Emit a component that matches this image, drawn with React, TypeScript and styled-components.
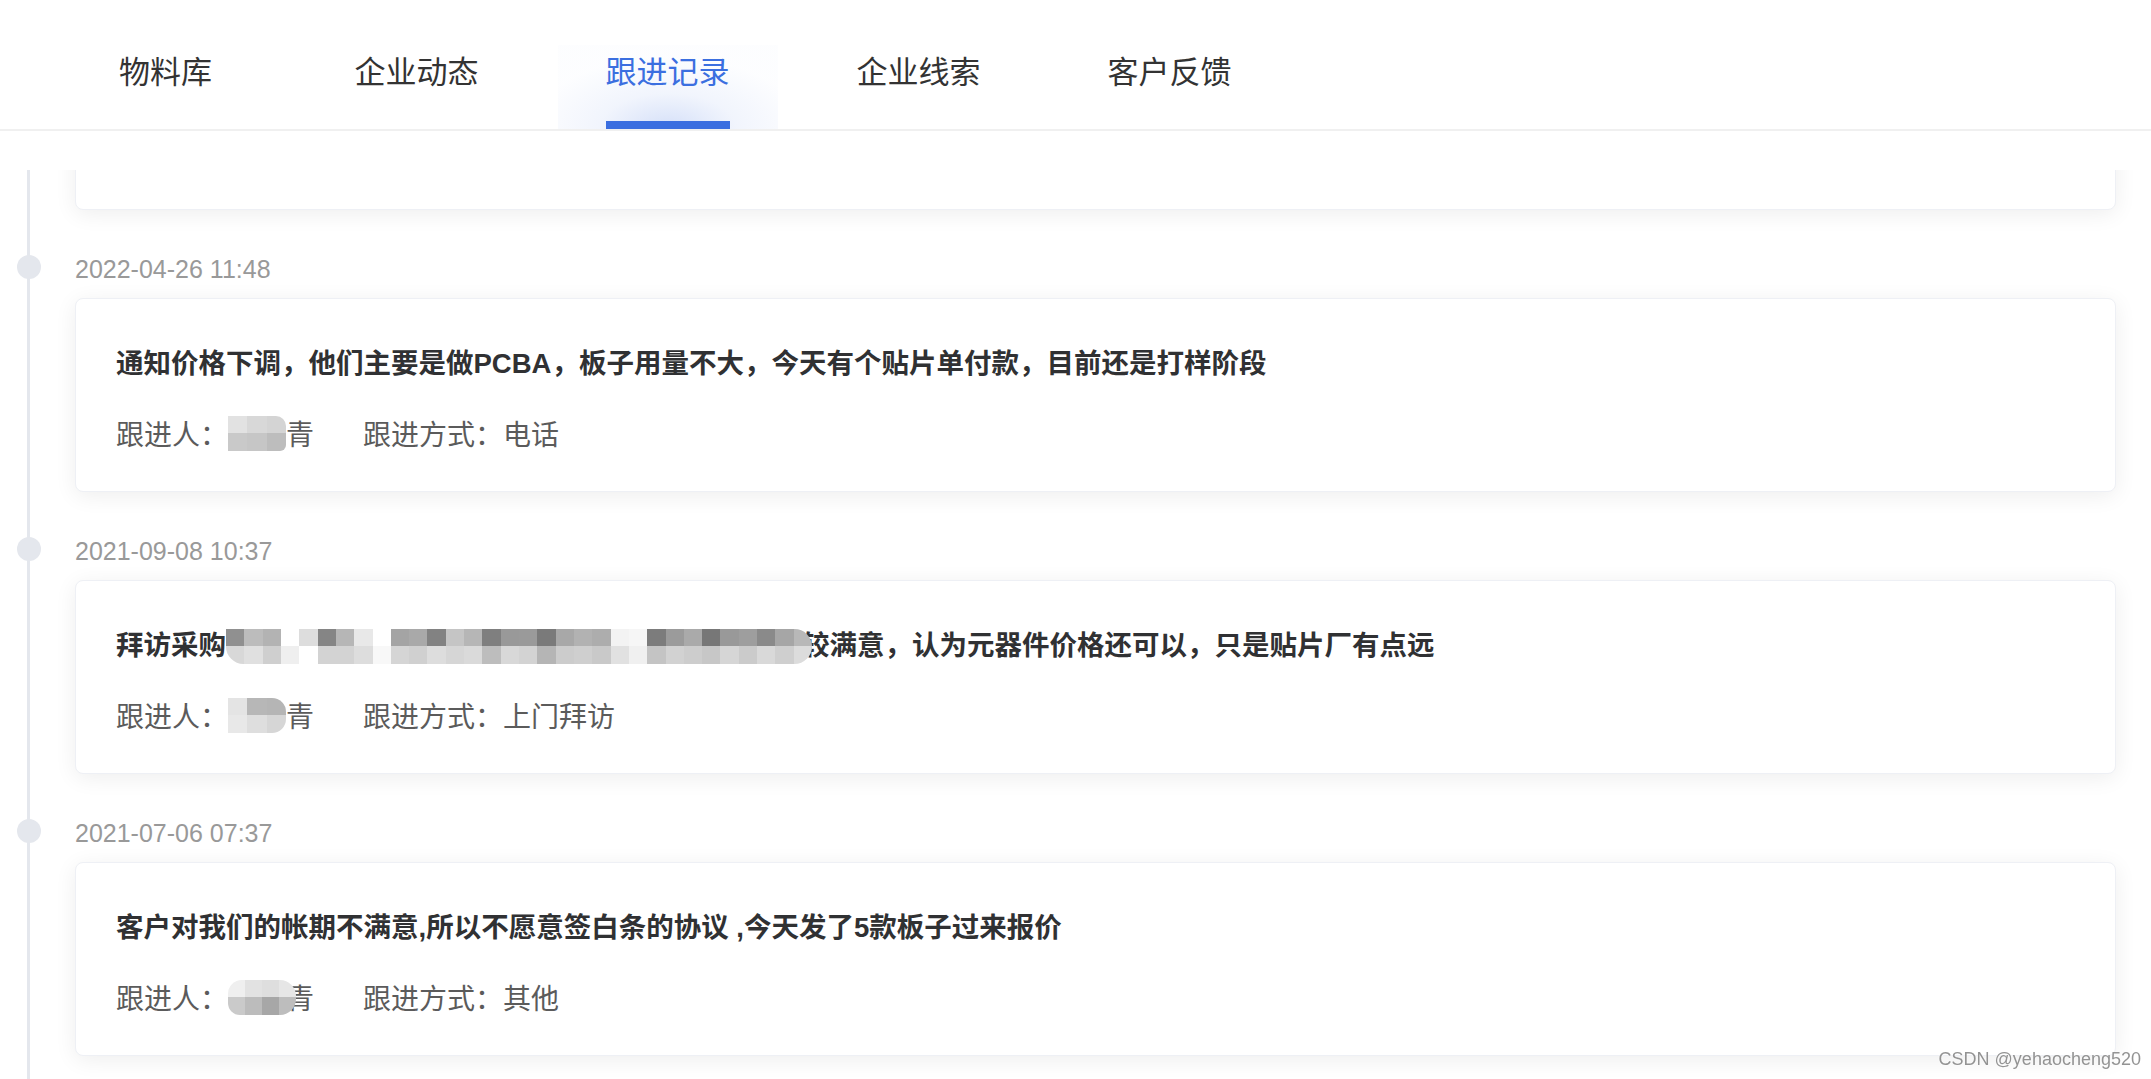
import { useLayoutEffect, useRef } from "react";
import styled, { createGlobalStyle } from "styled-components";

const GlobalStyle = createGlobalStyle`
  html, body {
    margin: 0;
    padding: 0;
    background: #fff;
  }
  body {
    font-family: "Liberation Sans", "Noto Sans CJK SC", sans-serif;
    overflow: hidden;
  }
  * {
    box-sizing: border-box;
  }
`;

const Page = styled.div`
  height: 1079px;
  display: flex;
  flex-direction: column;
`;

const TabBar = styled.div`
  flex: none;
  height: 131px;
  display: flex;
  padding-left: 40px;
  border-bottom: 2px solid #f0f0f0;
`;

const Tab = styled.div`
  width: 251px;
  display: flex;
  justify-content: center;
  cursor: pointer;
`;

const TabInner = styled.div<{ $active?: boolean }>`
  width: 220px;
  display: flex;
  justify-content: center;
  padding-top: 48px;
  background: ${(p) =>
    p.$active
      ? "radial-gradient(ellipse 62% 85% at 50% 100%, rgba(61,111,224,0.22) 0%, rgba(61,111,224,0.07) 50%, rgba(61,111,224,0.012) 100%) bottom / 100% 84px no-repeat"
      : "none"};
`;

const LabelBox = styled.div`
  display: flex;
  flex-direction: column;
`;

const TabLabel = styled.span<{ $active?: boolean }>`
  font-family: "Noto Sans CJK SC", sans-serif;
  font-size: 31px;
  line-height: 44px;
  color: ${(p) => (p.$active ? "#3b6fe0" : "#333")};
`;

const Underline = styled.div<{ $active?: boolean }>`
  margin-top: auto;
  height: 8px;
  background: ${(p) => (p.$active ? "#3a6ee0" : "transparent")};
`;

const Scroller = styled.div`
  flex: 1;
  margin-top: 39px;
  overflow-y: auto;
  scrollbar-width: none;
  &::-webkit-scrollbar {
    display: none;
  }
`;

const Timeline = styled.div`
  padding-right: 35px;
`;

const Item = styled.div`
  display: grid;
  grid-template-columns: 75px 1fr;
  padding-bottom: 42px;
  background: linear-gradient(#e4e7ed, #e4e7ed) 27px 0 / 3px 100% no-repeat;
`;

const Rail = styled.div`
  padding-left: 17px;
`;

const Dot = styled.div`
  width: 24px;
  height: 24px;
  margin-top: 3px;
  border-radius: 50%;
  background: #e4e7ed;
`;

const Body = styled.div`
  min-width: 0;
`;

const Time = styled.div`
  font-family: "Liberation Sans", sans-serif;
  font-size: 25px;
  line-height: 34px;
  color: #999;
  margin-bottom: 12px;
`;

const Card = styled.div`
  background: #fff;
  border: 1px solid #eef0f5;
  border-radius: 8px;
  box-shadow: 0 4px 22px rgba(0, 0, 0, 0.07);
  padding: 43px 40px 36px;
`;

const Title = styled.div`
  font-family: "Liberation Sans", "Noto Sans CJK SC", sans-serif;
  font-weight: 700;
  font-size: 27.5px;
  line-height: 44px;
  color: #303133;
  display: flex;
  align-items: center;
  white-space: nowrap;
`;

const Meta = styled.div`
  margin-top: 25px;
  display: flex;
  align-items: center;
  font-family: "Noto Sans CJK SC", sans-serif;
  font-size: 28px;
  line-height: 44px;
  color: #5b5b5b;
`;

const MetaItem = styled.div`
  display: flex;
  align-items: center;
  margin-right: 49px;
`;

const Mosaic = styled.div<{ $cols: number; $width: number; $round: string; $overlap?: number }>`
  position: relative;
  z-index: 1;
  display: grid;
  grid-template-columns: repeat(${(p) => p.$cols}, 1fr);
  grid-template-rows: 1fr 1fr;
  width: ${(p) => p.$width}px;
  height: 35px;
  margin-right: ${(p) => -(p.$overlap || 0)}px;
  border-radius: ${(p) => p.$round};
  overflow: hidden;
  flex: none;
`;

const Cell = styled.div<{ $shade: string }>`
  background: ${(p) => p.$shade};
`;

const Watermark = styled.div`
  position: fixed;
  right: 10px;
  bottom: 9px;
  font-family: "Liberation Sans", sans-serif;
  font-size: 18px;
  line-height: 22px;
  color: rgba(120, 120, 120, 0.8);
  text-shadow: 0 0 2px #fff;
`;

type Blur = { top: string[]; bottom: string[]; width: number; round: string; overlap?: number };

const MosaicBlock = ({ blur }: { blur: Blur }) => (
  <Mosaic $cols={blur.top.length} $width={blur.width} $round={blur.round} $overlap={blur.overlap}>
    {blur.top.map((c, i) => (
      <Cell key={"t" + i} $shade={c} />
    ))}
    {blur.bottom.map((c, i) => (
      <Cell key={"b" + i} $shade={c} />
    ))}
  </Mosaic>
);

const nameBlurs: Blur[] = [
  { top: ["#e2e2e2", "#dadada", "#d6d6d6"], bottom: ["#cacaca", "#c8c8c8", "#bebebe"], width: 58, round: "0 10px 6px 0" },
  { top: ["#e2e2e2", "#d8d8d8", "#d4d4d4"], bottom: ["#c9c9c9", "#c6c6c6", "#bdbdbd"], width: 58, round: "0 10px 6px 0" },
  { top: ["#e4e4e4", "#b7b7b7", "#b5b5b5"], bottom: ["#e8e8e8", "#dedede", "#d6d6d6"], width: 58, round: "0 14px 14px 0" },
  { top: ["#efefef", "#e2e2e2", "#dedede", "#e6e6e6"], bottom: ["#cacaca", "#bcbcbc", "#a7a7a7", "#bdbdbd"], width: 68, round: "14px 16px 16px 12px", overlap: 10 },
];

const titleBlur: Blur = {
  width: 586,
  round: "0 18px 18px 18px",
  overlap: 10,
  top: [
    "#909090", "#bcbcbc", "#b3b3b3", "#ffffff", "#dddddd", "#858585", "#b6b6b6", "#e8e8e8",
    "#ffffff", "#a4a4a4", "#a9a9a9", "#828282", "#c5c5c5", "#b6b6b6", "#7f7f7f", "#999999",
    "#9a9a9a", "#7a7a7a", "#a8a8a8", "#b2b2b2", "#adadad", "#f3f3f3", "#f6f6f6", "#7c7c7c",
    "#9b9b9b", "#aaaaaa", "#777777", "#999999", "#9e9e9e", "#8a8a8a", "#a6a6a6", "#b8b8b8",
  ],
  bottom: [
    "#d8d8d8", "#e0e0e0", "#cfcfcf", "#efefef", "#ffffff", "#d3d3d3", "#d3d3d3", "#dddddd",
    "#f8f8f8", "#d5d5d5", "#d0d0d0", "#dddddd", "#d6d6d6", "#dadada", "#bdbdbd", "#d8d8d8",
    "#d3d3d3", "#b5b5b5", "#cccccc", "#cfcfcf", "#c9c9c9", "#e1e1e1", "#f0f0f0", "#c4c4c4",
    "#d2d2d2", "#cdcdcd", "#c7c7c7", "#d6d6d6", "#cbcbcb", "#d9d9d9", "#cfcfcf", "#dcdcdc",
  ],
};

type Record = {
  time: string;
  before: string;
  after?: string;
  method: string;
};

const records: Record[] = [
  { time: "2022-05-18 15:02", before: "客户反馈样板已收到，质量没有问题，下周会安排小批量下单", method: "微信" },
  { time: "2022-04-26 11:48", before: "通知价格下调，他们主要是做PCBA，板子用量不大，今天有个贴片单付款，目前还是打样阶段", method: "电话" },
  { time: "2021-09-08 10:37", before: "拜访采购", after: "较满意，认为元器件价格还可以，只是贴片厂有点远", method: "上门拜访" },
  { time: "2021-07-06 07:37", before: "客户对我们的帐期不满意,所以不愿意签白条的协议 ,今天发了5款板子过来报价", method: "其他" },
  { time: "2021-05-12 14:20", before: "首次电话沟通，介绍了公司的产品和服务，客户表示有兴趣", method: "电话" },
];

const tabs = ["物料库", "企业动态", "跟进记录", "企业线索", "客户反馈"];

export default function App() {
  const scrollRef = useRef<HTMLDivElement>(null);

  useLayoutEffect(() => {
    if (scrollRef.current) scrollRef.current.scrollTop = 200;
  }, []);

  return (
    <>
      <GlobalStyle />
      <Page>
        <TabBar>
          {tabs.map((t) => {
            const active = t === "跟进记录";
            return (
              <Tab key={t}>
                <TabInner $active={active}>
                  <LabelBox>
                    <TabLabel $active={active}>{t}</TabLabel>
                    <Underline $active={active} />
                  </LabelBox>
                </TabInner>
              </Tab>
            );
          })}
        </TabBar>
        <Scroller ref={scrollRef}>
          <Timeline>
            {records.map((r, i) => (
              <Item key={r.time}>
                <Rail>
                  <Dot />
                </Rail>
                <Body>
                  <Time>{r.time}</Time>
                  <Card>
                    <Title>
                      {r.before}
                      {r.after !== undefined && (
                        <>
                          <MosaicBlock blur={titleBlur} />
                          {r.after}
                        </>
                      )}
                    </Title>
                    <Meta>
                      <MetaItem>
                        跟进人：
                        <MosaicBlock blur={nameBlurs[i % nameBlurs.length]} />
                        青
                      </MetaItem>
                      <MetaItem>跟进方式：{r.method}</MetaItem>
                    </Meta>
                  </Card>
                </Body>
              </Item>
            ))}
          </Timeline>
        </Scroller>
        <Watermark>CSDN @yehaocheng520</Watermark>
      </Page>
    </>
  );
}
